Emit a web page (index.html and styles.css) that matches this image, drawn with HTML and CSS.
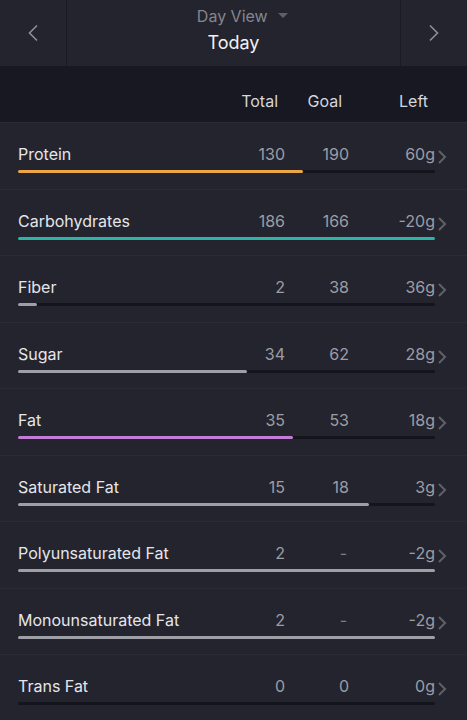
FILE: index.html
```html
<!DOCTYPE html>
<html lang="en">
<head>
  <meta charset="UTF-8">
  <title>Nutrients - Day View</title>
  <meta name="viewport" content="width=device-width, initial-scale=1.0">
  <link rel="stylesheet" href="styles.css">
</head>
<body>
  <header class="topbar">
    <div class="nav-btn nav-prev">
      <svg width="12" height="18" viewBox="0 0 12 18"><polyline points="10,1.5 2.5,9 10,16.5" /></svg>
    </div>
    <div class="title">
      <div class="view-pick">Day View <span class="caret"></span></div>
      <div class="day">Today</div>
    </div>
    <div class="nav-btn nav-next">
      <svg width="12" height="18" viewBox="0 0 12 18"><polyline points="2,1.5 9.5,9 2,16.5" /></svg>
    </div>
  </header>

  <div class="cols">
    <div class="cols-main">
      <span></span>
      <span>Total</span>
      <span>Goal</span>
      <span>Left</span>
    </div>
  </div>

  <ul class="list">
    <li class="row">
      <div class="row-main">
        <div class="cells"><span class="name">Protein</span><span>130</span><span>190</span><span>60g</span></div>
        <div class="track"><div class="fill orange" style="width: 68.4%"></div></div>
      </div>
      <svg class="more" width="10" height="16" viewBox="0 0 10 16"><polyline points="2,2 8,8 2,14" /></svg>
    </li>
    <li class="row">
      <div class="row-main">
        <div class="cells"><span class="name">Carbohydrates</span><span>186</span><span>166</span><span>-20g</span></div>
        <div class="track"><div class="fill teal" style="width: 100%"></div></div>
      </div>
      <svg class="more" width="10" height="16" viewBox="0 0 10 16"><polyline points="2,2 8,8 2,14" /></svg>
    </li>
    <li class="row">
      <div class="row-main">
        <div class="cells"><span class="name">Fiber</span><span>2</span><span>38</span><span>36g</span></div>
        <div class="track"><div class="fill" style="width: 4.5%"></div></div>
      </div>
      <svg class="more" width="10" height="16" viewBox="0 0 10 16"><polyline points="2,2 8,8 2,14" /></svg>
    </li>
    <li class="row">
      <div class="row-main">
        <div class="cells"><span class="name">Sugar</span><span>34</span><span>62</span><span>28g</span></div>
        <div class="track"><div class="fill" style="width: 54.8%"></div></div>
      </div>
      <svg class="more" width="10" height="16" viewBox="0 0 10 16"><polyline points="2,2 8,8 2,14" /></svg>
    </li>
    <li class="row">
      <div class="row-main">
        <div class="cells"><span class="name">Fat</span><span>35</span><span>53</span><span>18g</span></div>
        <div class="track"><div class="fill purple" style="width: 66%"></div></div>
      </div>
      <svg class="more" width="10" height="16" viewBox="0 0 10 16"><polyline points="2,2 8,8 2,14" /></svg>
    </li>
    <li class="row">
      <div class="row-main">
        <div class="cells"><span class="name">Saturated Fat</span><span>15</span><span>18</span><span>3g</span></div>
        <div class="track"><div class="fill" style="width: 84.2%"></div></div>
      </div>
      <svg class="more" width="10" height="16" viewBox="0 0 10 16"><polyline points="2,2 8,8 2,14" /></svg>
    </li>
    <li class="row">
      <div class="row-main">
        <div class="cells"><span class="name">Polyunsaturated Fat</span><span>2</span><span class="dash">-</span><span>-2g</span></div>
        <div class="track"><div class="fill" style="width: 100%"></div></div>
      </div>
      <svg class="more" width="10" height="16" viewBox="0 0 10 16"><polyline points="2,2 8,8 2,14" /></svg>
    </li>
    <li class="row">
      <div class="row-main">
        <div class="cells"><span class="name">Monounsaturated Fat</span><span>2</span><span class="dash">-</span><span>-2g</span></div>
        <div class="track"><div class="fill" style="width: 100%"></div></div>
      </div>
      <svg class="more" width="10" height="16" viewBox="0 0 10 16"><polyline points="2,2 8,8 2,14" /></svg>
    </li>
    <li class="row">
      <div class="row-main">
        <div class="cells"><span class="name">Trans Fat</span><span>0</span><span>0</span><span>0g</span></div>
        <div class="track"><div class="fill" style="width: 0%"></div></div>
      </div>
      <svg class="more" width="10" height="16" viewBox="0 0 10 16"><polyline points="2,2 8,8 2,14" /></svg>
    </li>
  </ul>
</body>
</html>
```

FILE: styles.css
```css
* { box-sizing: border-box; }

body {
  margin: 0;
  background: #23242e;
  font-family: Inter, "Noto Sans", sans-serif;
  color: #e6e6ea;
  overflow: hidden;
}

/* top bar */
.topbar {
  display: grid;
  grid-template-columns: 67px 1fr 67px;
  height: 66px;
  background: #23242e;
}

.nav-btn {
  display: flex;
  align-items: center;
  justify-content: center;
}

.nav-prev { border-right: 1px solid #1a1b23; padding-right: 1px; }
.nav-next { border-left: 1px solid #1a1b23; }

.nav-btn svg polyline {
  fill: none;
  stroke: #8e8f97;
  stroke-width: 1.6;
}

.title {
  text-align: center;
  padding-top: 5px;
}

.view-pick {
  font-size: 16px;
  line-height: 22px;
  color: #85868e;
  padding-left: 18px;
}

.caret {
  display: inline-block;
  width: 0;
  height: 0;
  margin-left: 6px;
  vertical-align: 4px;
  border-left: 5px solid transparent;
  border-right: 5px solid transparent;
  border-top: 5px solid #5e5f67;
}

.day {
  margin-top: 4px;
  font-size: 18px;
  line-height: 24px;
  color: #f1f1f4;
}

/* column titles */
.cols {
  height: 57px;
  background: #171821;
  border-bottom: 1px solid #2b2c36;
  padding: 25px 0 0 18px;
}

.cols-main,
.cells {
  display: grid;
  grid-template-columns: 1fr 60px 64px 86px;
  width: 417px;
  font-size: 16px;
  line-height: 20px;
}

.cols-main span {
  text-align: right;
  padding-right: 7px;
  color: #d6d6db;
}

/* nutrient rows */
.list {
  list-style: none;
  margin: 0;
  padding: 0;
}

.row {
  display: flex;
  height: 66.5px;
  padding: 21px 0 0 18px;
  border-bottom: 1px solid #2a2b35;
}

.row-main {
  width: 417px;
}

.cells span {
  text-align: right;
  color: #9c9da5;
}

.cells .name {
  text-align: left;
  color: #e6e6ea;
}

.cells .dash {
  padding-right: 2px;
  color: #7c7d85;
}

.track {
  height: 3px;
  margin-top: 6px;
  background: #14151c;
  border-radius: 2px;
}

.fill {
  height: 100%;
  border-radius: 2px;
  background: #9e9fa7;
}

.fill.orange { background: #eda646; }
.fill.teal { background: #2db4a6; }
.fill.purple { background: #c57bd8; }

.more {
  margin: 5px 0 0 2px;
}

.more polyline {
  fill: none;
  stroke: #5f6068;
  stroke-width: 2;
}
```
